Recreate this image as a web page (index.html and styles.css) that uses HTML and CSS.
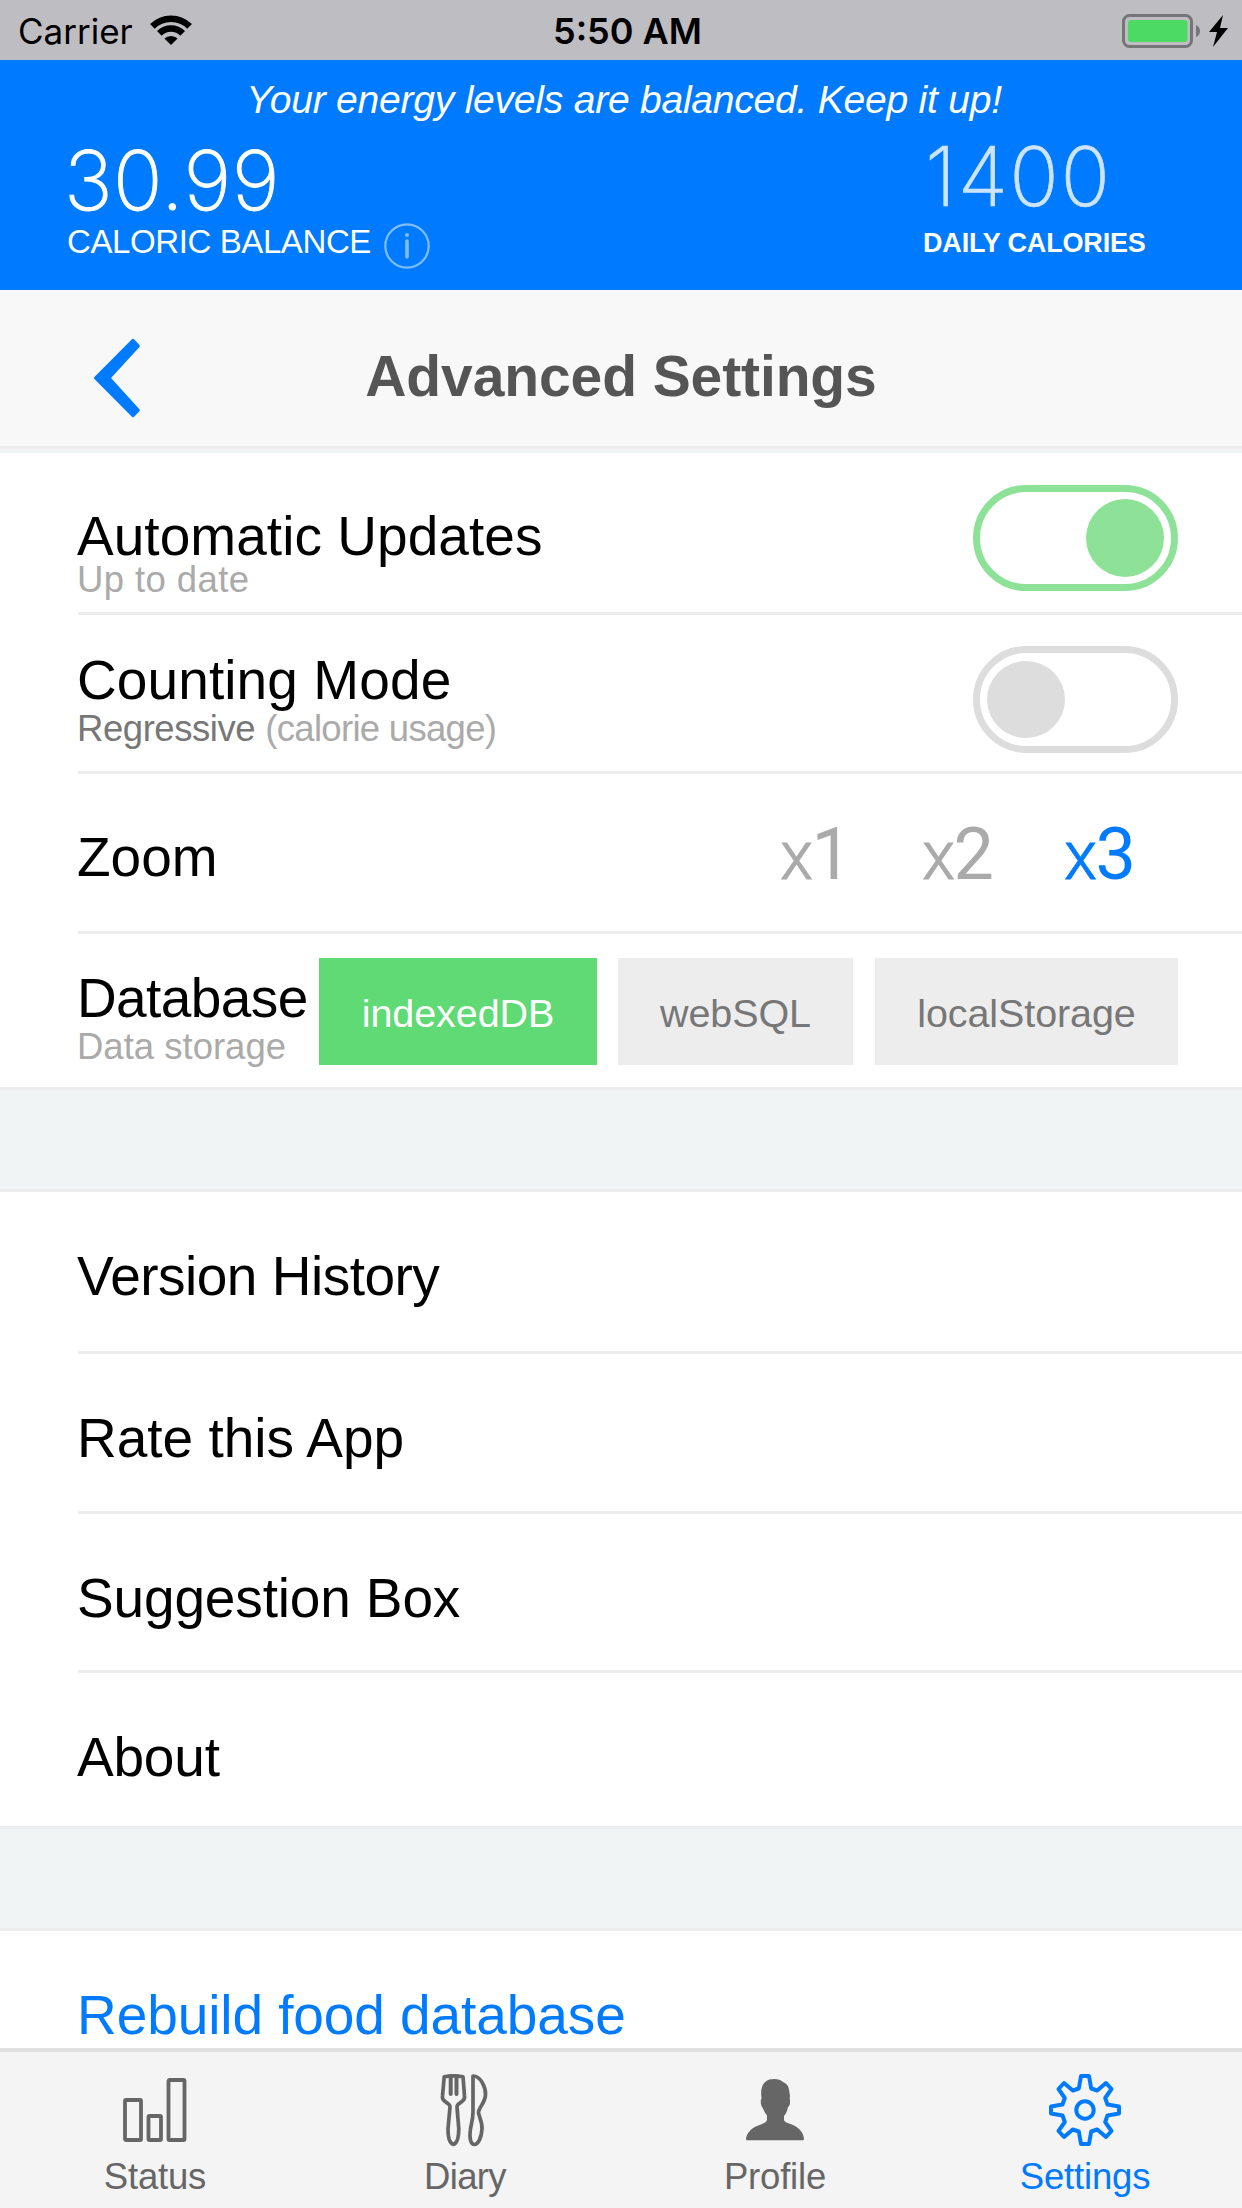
FILE: index.html
```html
<!DOCTYPE html>
<html lang="en">
<head>
<meta charset="utf-8">
<title>Advanced Settings</title>
<link rel="stylesheet" href="styles.css">
</head>
<body>
<div class="app">
  <div class="statusbar">
    <div class="statusbar-left">
      <span class="carrier">Carrier</span>
      <svg class="wifi" width="44" height="32" viewBox="0 0 44 32">
        <g fill="none" stroke="#000" stroke-width="6.6"><path d="M3.4 12.4a26.3 26.3 0 0 1 37.2 0"/><path d="M10.3 19.3a16.5 16.5 0 0 1 23.4 0"/></g>
        <path d="M22 31l-6.6-6.4a9.4 9.4 0 0 1 13.2 0z"/>
      </svg>
    </div>
    <div class="clock">5:50 AM</div>
    <div class="statusbar-right">
      <svg width="106" height="34" viewBox="0 0 106 34">
        <rect x="1.5" y="1.5" width="68" height="31" rx="6" fill="none" stroke="#75757a" stroke-width="3"/>
        <rect x="6" y="6" width="59.5" height="22" rx="3" fill="#4cd964"/>
        <path d="M74 11q4 2 4 6t-4 6z" fill="#75757a"/>
        <path d="M101 1L87 18h8l-4 15L106 14h-8z"/>
      </svg>
    </div>
  </div>

  <header class="summary">
    <p class="message">Your energy levels are balanced. Keep it up!</p>
    <div class="stats">
      <div class="stat stat-balance">
        <div class="stat-value balance">30.99</div>
        <div class="stat-label"><span>CALORIC BALANCE</span>
          <svg class="info" width="46" height="46" viewBox="0 0 46 46">
            <g fill="none" stroke="#fff" stroke-opacity=".5"><circle cx="23" cy="23" r="21.7" stroke-width="2.2"/><path d="M23 18v16" stroke-width="3.6" stroke-linecap="round"/></g>
            <circle cx="23" cy="12" r="2" fill="#fff" fill-opacity=".5"/>
          </svg>
        </div>
      </div>
      <div class="stat stat-daily">
        <div class="stat-value daily">1400</div>
        <div class="daily-label">DAILY CALORIES</div>
      </div>
    </div>
  </header>

  <nav class="navbar">
    <svg class="back" width="48" height="80" viewBox="0 0 48 80">
      <path d="M2.5 40L40 2.3 45.3 8 16 40 45.3 72.2 40 77.7z" fill="#007aff" stroke="#007aff" stroke-width="3" stroke-linejoin="round"/>
    </svg>
    <h1>Advanced Settings</h1>
  </nav>

  <main class="content">
    <section class="group">
      <div class="row row-updates">
        <div class="label"><div class="name updates">Automatic Updates</div><div class="note up">Up to date</div></div>
        <div class="toggle on"><span class="knob"></span></div>
      </div>
      <div class="row row-mode">
        <div class="label"><div class="name mode">Counting Mode</div><div class="note"><span class="current">Regressive</span> <span class="usage">(calorie usage)</span></div></div>
        <div class="toggle"><span class="knob"></span></div>
      </div>
      <div class="row row-zoom">
        <div class="name">Zoom</div>
        <div class="zooms"><span class="zoom"><i>x</i>1</span><span class="zoom"><i>x</i>2</span><span class="zoom selected"><i>x</i>3</span></div>
      </div>
      <div class="row row-database">
        <div class="label"><div class="name database">Database</div><div class="note">Data storage</div></div>
        <div class="engines"><span class="engine selected">indexedDB</span><span class="engine web">webSQL</span><span class="engine local">localStorage</span></div>
      </div>
    </section>
    <section class="group">
      <div class="row row-history"><div class="name history">Version History</div></div>
      <div class="row row-rate"><div class="name rate">Rate this App</div></div>
      <div class="row row-suggest"><div class="name suggest">Suggestion Box</div></div>
      <div class="row row-about"><div class="name about">About</div></div>
    </section>
    <section class="group">
      <div class="row row-rebuild"><div class="name link">Rebuild food database</div></div>
    </section>
  </main>

  <footer class="tabbar">
    <div class="tab">
      <svg width="72" height="72" viewBox="0 0 72 72" fill="none" stroke="#666" stroke-width="3.8">
        <rect x="6" y="26" width="16" height="40" rx="1"/><rect x="29.5" y="42" width="12.5" height="24" rx="1"/><rect x="49.5" y="6" width="16" height="60" rx="1"/>
      </svg>
      <span>Status</span>
    </div>
    <div class="tab">
      <svg width="52" height="76" viewBox="0 0 52 76" fill="none" stroke="#666" stroke-width="3.7" stroke-linejoin="round">
        <path d="M5.2 4.8Q14.5 2.8 24 4.8L25.5 24Q26 27 23.5 29L19 32.5Q18 33.5 18 35L19.8 57Q19.500 71 14.500 72.500Q9 71 9 57L11 35Q11 33.500 10 32.500L5.500 29Q3 27 3.500 24z"/>
        <path d="M11.7 4v18M17.5 4v18" stroke-width="4" stroke-linecap="round"/>
        <path d="M34 4C42 4 47 16 46.5 23C46 31 39.5 36 39.5 40.5C40 45 43.5 50 43 57C42.5 66 39 72.5 35.5 72.5C31 72.5 30.5 64 31.2 59C32 52 34 48 34 40z"/>
      </svg>
      <span class="diary">Diary</span>
    </div>
    <div class="tab">
      <svg width="58" height="72" viewBox="0 -5 58 72" fill="#666">
        <path d="M1 61.3Q0 61.3 0 59.5C1 54 5 49.5 11 47C17 45 21 43 21 40.5V36.5C19 34 18 32 17 29.5Q15 27 14.8 24V21Q15.6 20 15.5 18.5C14 9 17 0 28 0Q34 0 37 3Q42 5 42.8 9.500L44 17Q43.500 19 44 21V24.500Q43.500 27 42 28C41.500 31 40 35 38 37V40.500Q38 43 43 44.500C51 47 57 51.500 58 59.500Q58 61.300 57 61.300z"/>
      </svg>
      <span>Profile</span>
    </div>
    <div class="tab active">
      <svg width="72" height="72" viewBox="-36 -36 72 72" fill="none" stroke="#007aff" stroke-width="4" stroke-linejoin="round">
        <path d="M-4-34H4L6.2-21.5 12.2-19.5 21-27 26.5-21 20.2-12 22.5-5.5 34-3.5V3.5L22.5 5.5 20.2 12 26.5 21 21 27 12.2 19.5 6.2 21.5 4 34H-4L-6.2 21.5-12.2 19.5-21 27-26.5 21-20.2 12-22.5 5.5-34 3.5V-3.5L-22.5-5.5-20.2-12-26.5-21-21-27-12.2-19.5-6.2-21.5z"/>
        <circle r="8.7"/>
      </svg>
      <span>Settings</span>
    </div>
  </footer>
</div>
</body>
</html>
```
FILE: styles.css
```css
* { box-sizing: border-box; }

body {
  margin: 0;
  font-family: "Liberation Sans", Arial, sans-serif;
  color: #000;
  background: #fff;
}

.app {
  display: flex;
  flex-direction: column;
  width: 1242px;
  height: 2208px;
  overflow: hidden;
}

.app svg { display: block; flex: none; }

/* System status bar */
.statusbar {
  flex: none;
  display: grid;
  grid-template-columns: 1fr auto 1fr;
  height: 60px;
  background: #bebdc2;
  font-family: Inter, sans-serif;
  line-height: 60px;
}

.statusbar-left { display: flex; padding: 1px 0 0 18px; }
.carrier { width: 131px; font-size: 35px; }
.wifi { margin-top: 13px; }
.clock { padding: 1px 0 0 13px; font-size: 36px; font-weight: 600; }
.statusbar-right { display: flex; justify-content: flex-end; align-items: center; padding-right: 14px; }

/* Calorie summary */
.summary {
  flex: none;
  height: 230px;
  padding-top: 10px;
  background: #007aff;
  color: #fff;
}

.message {
  margin: 0;
  padding-left: 6px;
  font-size: 39px;
  font-style: italic;
  letter-spacing: -.22px;
  line-height: 60px;
  text-align: center;
}

.stats { display: flex; justify-content: space-between; padding: 8px 96px 0 67px; }
.stat-balance { padding-top: 4px; }
.stat-daily { flex: none; width: 223px; }

.stat-value {
  font-family: Inter, sans-serif;
  font-size: 82px;
  font-weight: 200;
  line-height: 78px;
}

.balance { margin-left: -3px; letter-spacing: .4px; -webkit-text-stroke: .9px #fff; }
.daily { margin-left: 2px; letter-spacing: 1.5px; opacity: .8; -webkit-text-stroke: .7px #fff; }
.stat-label { display: flex; margin-top: 2px; font-size: 33px; letter-spacing: -.4px; line-height: 40px; }
.info { margin: 1px 0 0 13px; }
.daily-label { margin-top: 7px; font-size: 27px; font-weight: bold; letter-spacing: -.17px; line-height: 40px; }

/* Page title */
.navbar {
  flex: none;
  display: grid;
  grid-template-columns: 1fr auto 1fr;
  height: 159px;
  border-bottom: 3px solid #ededed;
  background: #f8f8f8;
}

.back { margin: 48px 0 0 93px; }
.navbar h1 { margin: 0; color: #555; font-size: 57px; letter-spacing: -.1px; line-height: 172px; }

/* Settings lists */
.content {
  flex: 1;
  min-height: 0;
  overflow: hidden;
  padding-top: 4px;
  background: #f0f4f5;
}

.group { background: #fff; }
.group + .group { margin-top: 99px; border-top: 3px solid #ededed; }
.group:not(:last-child) { border-bottom: 3px solid #ededed; }

.row {
  display: flex;
  justify-content: space-between;
  align-items: flex-start;
  margin-left: 78px;
  padding: 54px 64px 0 0;
  border-bottom: 3px solid #ededed;
}
.row:last-child { border-bottom: 0; }

.row-updates { height: 162px; padding-top: 53px; }
.row-mode { height: 159px; padding-top: 35px; }
.row-zoom { height: 160px; padding: 53px 36px 0 0; }
.row-database { height: 153px; padding-top: 34px; }
.row-history { height: 162px; }
.row-rate { height: 160px; }
.row-suggest { height: 159px; }
.row-about { height: 153px; }
.row-rebuild { height: 162px; }

.name { margin-left: -1px; font-size: 55px; line-height: 60px; white-space: nowrap; }
.updates { letter-spacing: .05px; }
.mode { letter-spacing: .1px; }
.database { letter-spacing: -.6px; }
.history { letter-spacing: -.5px; }
.rate { letter-spacing: 0; }
.suggest { letter-spacing: -.15px; }
.about { letter-spacing: -.2px; }
.link { letter-spacing: -.08px; color: #007aff; }

.note { margin: -1px 0 0 -1px; color: #aaa; font-size: 36.5px; line-height: 40px; white-space: nowrap; }
.up { margin: -6px 0 0 -1px; letter-spacing: .4px; }
.current { color: #777; letter-spacing: -.44px; }
.usage { letter-spacing: -.7px; }

.toggle {
  display: flex;
  width: 205px;
  height: 107px;
  margin-top: -4px;
  padding: 8px 7px;
  border: 7px solid #ddd;
  border-radius: 54px;
}
.knob { width: 78px; height: 77px; border-radius: 50%; background: #ddd; }
.toggle.on { height: 106px; margin-top: -21px; padding: 7px; justify-content: flex-end; border-color: #8ee298; }
.on .knob { height: 78px; background: #8ee298; }

.zooms { display: flex; margin-top: -12px; }
.zoom { width: 142px; color: #aaa; font: 72px/80px Roboto, sans-serif; }
.zoom i { font: 300 68px/0 Roboto, sans-serif; letter-spacing: -1.5px; -webkit-text-stroke: .9px; }
.zoom.selected { color: #007aff; }

.engines { display: flex; margin-top: -10px; }
.engine {
  width: 278px;
  height: 107px;
  padding-top: 2px;
  background: #ededed;
  color: #777;
  font-size: 39.5px;
  line-height: 107px;
  letter-spacing: -.1px;
  text-align: center;
}
.engine.selected { background: #5fda75; color: #fff; }
.web { width: 235px; margin: 0 22px 0 21px; }
.local { width: 303px; }

/* Bottom tabs */
.tabbar {
  flex: none;
  display: grid;
  grid-template-columns: repeat(4, 310px);
  height: 160px;
  border-top: 4px solid #e0e0e0;
  background: #f4f4f4;
}

.tab {
  display: flex;
  flex-direction: column;
  align-items: center;
  justify-content: flex-end;
  padding-bottom: 11px;
  color: #666;
  font-size: 36.5px;
  letter-spacing: -.18px;
  line-height: 40px;
}
.tab svg { margin-bottom: 11px; }
.tab:nth-child(2) svg { margin-bottom: 9px; }
.diary { letter-spacing: -.65px; }
.tab.active { color: #007aff; }
```
